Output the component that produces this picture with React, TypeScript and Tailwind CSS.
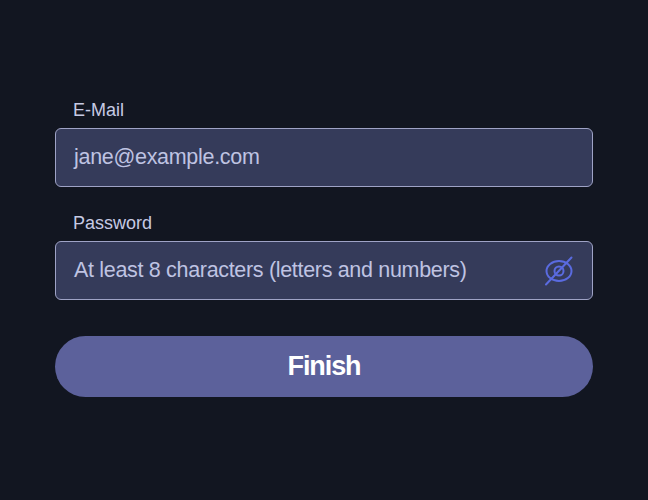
export default function App() {
  return (
    <div className="h-[500px] w-[648px] bg-[#121621] px-[55px] pt-[99px] font-['Liberation_Sans',sans-serif]">
      <label className="block pl-[18px] text-[18px] leading-[22px] text-[#c6cae4]">E-Mail</label>
      <div className="mt-[7px] flex h-[59px] items-center rounded-[6px] border border-[#9fa3c6] bg-[#353b5a] pl-[18px] pr-[18px]">
        <span className="text-[21.5px] tracking-[-0.3px] text-[#bfc3e2]">jane@example.com</span>
      </div>
      <label className="mt-[25px] block pl-[18px] text-[18px] leading-[22px] text-[#c6cae4]">Password</label>
      <div className="mt-[7px] flex h-[59px] items-center justify-between rounded-[6px] border border-[#9fa3c6] bg-[#353b5a] pl-[18px] pr-[18px]">
        <span className="text-[21.5px] tracking-[-0.32px] text-[#bfc3e2]">At least 8 characters (letters and numbers)</span>
        <svg width="30" height="30" viewBox="0 0 30 30" fill="none" stroke="#5a6be0" strokeWidth="2" strokeLinecap="round">
          <ellipse cx="15" cy="15" rx="12.5" ry="10" />
          <circle cx="15" cy="15" r="4.500" />
          <path d="M27.500 1.500 2 28.500" />
        </svg>
      </div>
      <button className="mt-[36px] flex h-[61px] w-full items-center justify-center rounded-[31px] bg-[#5c619b] text-[27px] font-bold tracking-[-1.1px] text-white">
        Finish
      </button>
    </div>
  );
}
